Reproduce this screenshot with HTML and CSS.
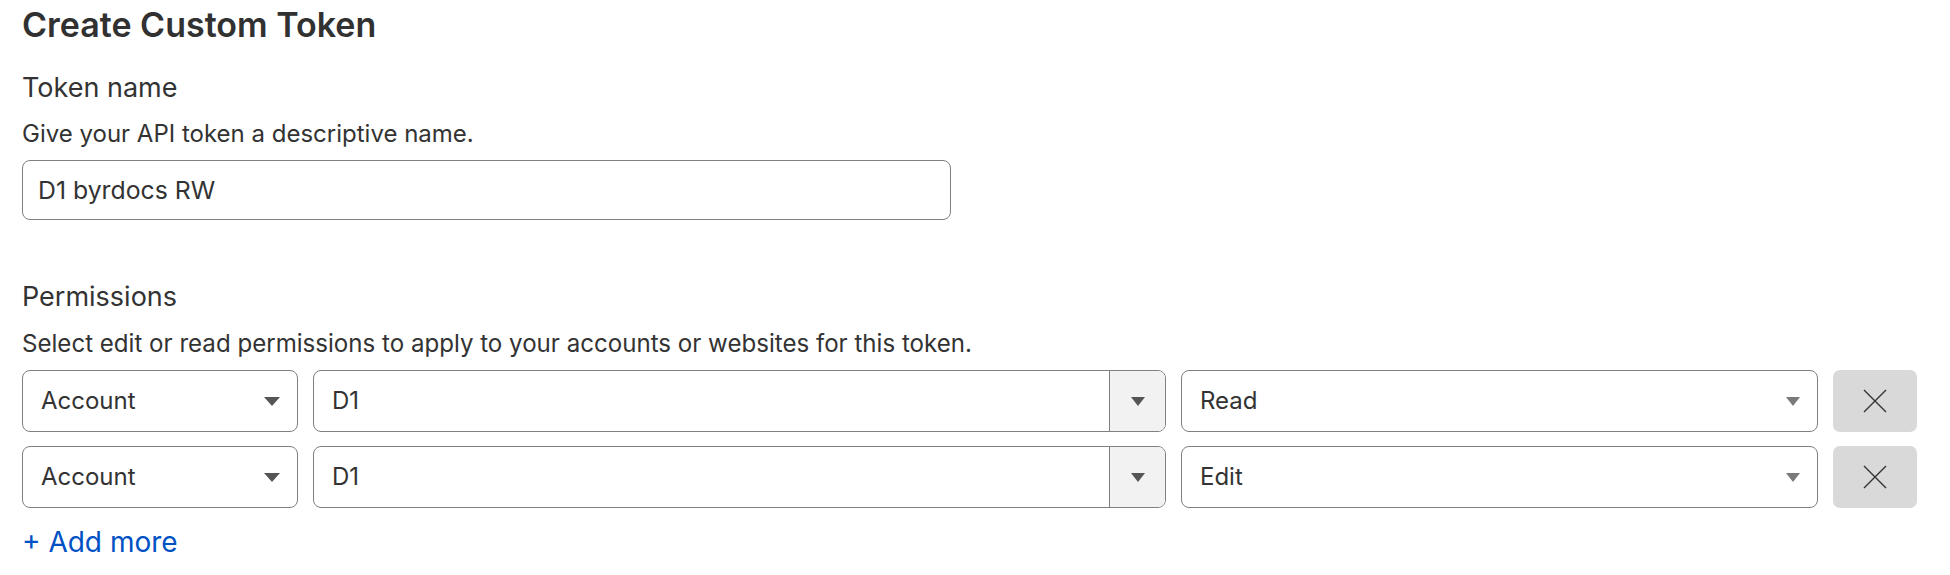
FILE: index.html
```html
<!DOCTYPE html>
<html lang="en">
<head>
<meta charset="utf-8">
<title>Create Custom Token</title>
<link rel="stylesheet" href="styles.css">
</head>
<body>
<main class="page">
  <h1 class="title">Create Custom Token</h1>

  <section class="field">
    <h2 class="label">Token name</h2>
    <p class="help">Give your API token a descriptive name.</p>
    <div class="text-input">D1 byrdocs RW</div>
  </section>

  <section class="field perms">
    <h2 class="label">Permissions</h2>
    <p class="help">Select edit or read permissions to apply to your accounts or websites for this token.</p>
    <div class="rows">
      <div class="row">
        <div class="select scope"><span class="value">Account</span><span class="caret"></span></div>
        <div class="combo"><span class="value">D1</span><span class="combo-toggle"><span class="caret small"></span></span></div>
        <div class="select level"><span class="value">Read</span><span class="caret small light"></span></div>
        <button class="remove" type="button" aria-label="Remove">
          <svg width="24" height="24" viewBox="0 0 24 24"><path d="M1 1 L23 23 M23 1 L1 23" stroke="#333" stroke-width="1.4" fill="none"/></svg>
        </button>
      </div>
      <div class="row">
        <div class="select scope"><span class="value">Account</span><span class="caret"></span></div>
        <div class="combo"><span class="value">D1</span><span class="combo-toggle"><span class="caret small"></span></span></div>
        <div class="select level"><span class="value">Edit</span><span class="caret small light"></span></div>
        <button class="remove" type="button" aria-label="Remove">
          <svg width="24" height="24" viewBox="0 0 24 24"><path d="M1 1 L23 23 M23 1 L1 23" stroke="#333" stroke-width="1.4" fill="none"/></svg>
        </button>
      </div>
    </div>
    <a class="add-more" href="#">+ Add more</a>
  </section>
</main>
</body>
</html>
```

FILE: styles.css
```css
* { box-sizing: border-box; }
html, body { margin: 0; padding: 0; background: #fff; }
body {
  font-family: Inter, "Noto Sans", sans-serif;
  color: #333;
}
.page {
  padding: 5px 0 0 22px;
  width: 1917px;
}
.title {
  margin: 0;
  font-size: 34px;
  line-height: 40px;
  font-weight: 600;
  color: #313131;
}
.field { display: flex; flex-direction: column; }
.label {
  margin: 25px 0 0;
  font-size: 27px;
  line-height: 36px;
  font-weight: 400;
  color: #333;
}
.help {
  margin: 14px 0 0;
  font-size: 24px;
  line-height: 28px;
  color: #333;
}
.text-input {
  margin-top: 12px;
  width: 929px;
  height: 60px;
  border: 1px solid #808080;
  border-radius: 8px;
  padding: 0 15px;
  font-size: 24.8px;
  line-height: 58px;
  color: #333;
}
.perms .label { margin-top: 59px; }
.perms .help { margin-top: 15px; font-size: 24.1px; }
.rows {
  margin-top: 12px;
  display: flex;
  flex-direction: column;
  gap: 14px;
}
.row {
  display: grid;
  grid-template-columns: 276px 853px 637px 84px;
  column-gap: 15px;
  height: 62px;
}
.select, .combo {
  border: 1px solid #808080;
  border-radius: 8px;
  display: flex;
  align-items: center;
  font-size: 24px;
  line-height: 60px;
  color: #333;
  overflow: hidden;
}
.select { padding: 0 17px 0 18px; justify-content: space-between; }
.combo { padding-left: 18px; }
.combo .value { flex: 1; }
.combo-toggle {
  width: 56px;
  height: 100%;
  border-left: 1px solid #808080;
  background: #f2f2f2;
  display: flex;
  align-items: center;
  justify-content: center;
}
.caret {
  width: 0; height: 0;
  border-left: 8px solid transparent;
  border-right: 8px solid transparent;
  border-top: 9px solid #555;
}
.caret.small {
  border-left-width: 7.5px;
  border-right-width: 7.5px;
  border-top-width: 9px;
}
.caret.light { border-top-color: #7a7a7a; }
.remove {
  border: 0;
  border-radius: 7px;
  background: #d9d9d9;
  display: flex;
  align-items: center;
  justify-content: center;
  padding: 0;
}
.add-more {
  margin-top: 16px;
  align-self: flex-start;
  font-size: 28px;
  line-height: 36px;
  color: #0051c3;
  text-decoration: none;
}
```
